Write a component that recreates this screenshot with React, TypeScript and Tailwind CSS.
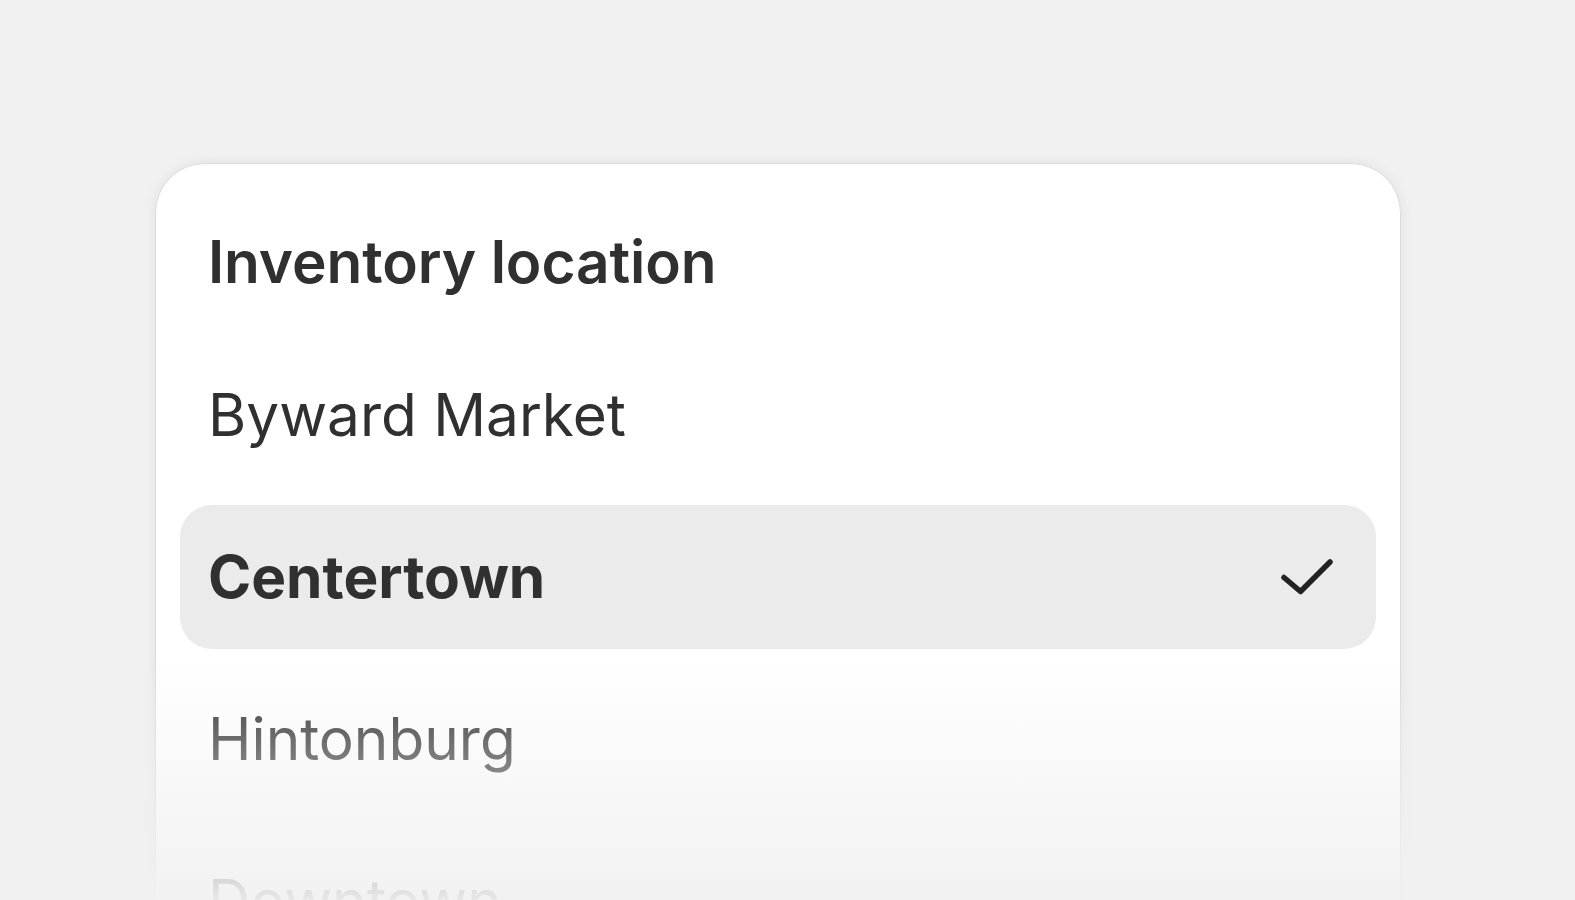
import React from 'react';

const locations = [
  { name: 'Byward Market', selected: false },
  { name: 'Centertown', selected: true },
  { name: 'Hintonburg', selected: false },
  { name: 'Downtown', selected: false },
];

const CheckMark = () => (
  <svg width="54" height="38" viewBox="0 0 54 38" fill="none" className="shrink-0">
    <polyline
      points="4,19.5 20.5,33.5 50,4"
      stroke="#222222"
      strokeWidth="5.5"
      strokeLinecap="round"
      strokeLinejoin="round"
    />
  </svg>
);

export default function App() {
  return (
    <div
      className="relative h-screen w-full overflow-hidden bg-[#f1f1f1]"
      style={{ fontFamily: 'Inter, "Noto Sans", sans-serif' }}
    >
      <div className="pt-[163px] pl-[155px]">
        <div className="w-[1246px] h-[900px] rounded-t-[50px] bg-white border border-[#dcdcdc] shadow-[0_0_14px_rgba(0,0,0,0.07)] px-6 pt-[63px]">
          <h2 className="pl-7 text-[58.5px] leading-[70px] font-semibold text-[#303030] tracking-[-0.1px]">
            Inventory location
          </h2>
          <div className="mt-[46px] flex flex-col gap-[18px]">
            {locations.map((loc) => (
              <div
                key={loc.name}
                className={`h-[144px] flex items-center justify-between pl-7 pr-[42px] rounded-[32px] ${
                  loc.selected ? 'bg-[#ebebeb]' : ''
                }`}
              >
                <span
                  className={`text-[58.5px] leading-[70px] text-[#303030] ${
                    loc.selected ? 'font-bold' : 'font-normal'
                  }`}
                >
                  {loc.name}
                </span>
                {loc.selected && <CheckMark />}
              </div>
            ))}
          </div>
        </div>
      </div>
      <div className="pointer-events-none absolute inset-x-0 bottom-0 h-[240px] bg-gradient-to-b from-[#f1f1f1]/0 to-[#f1f1f1]/95" />
    </div>
  );
}
